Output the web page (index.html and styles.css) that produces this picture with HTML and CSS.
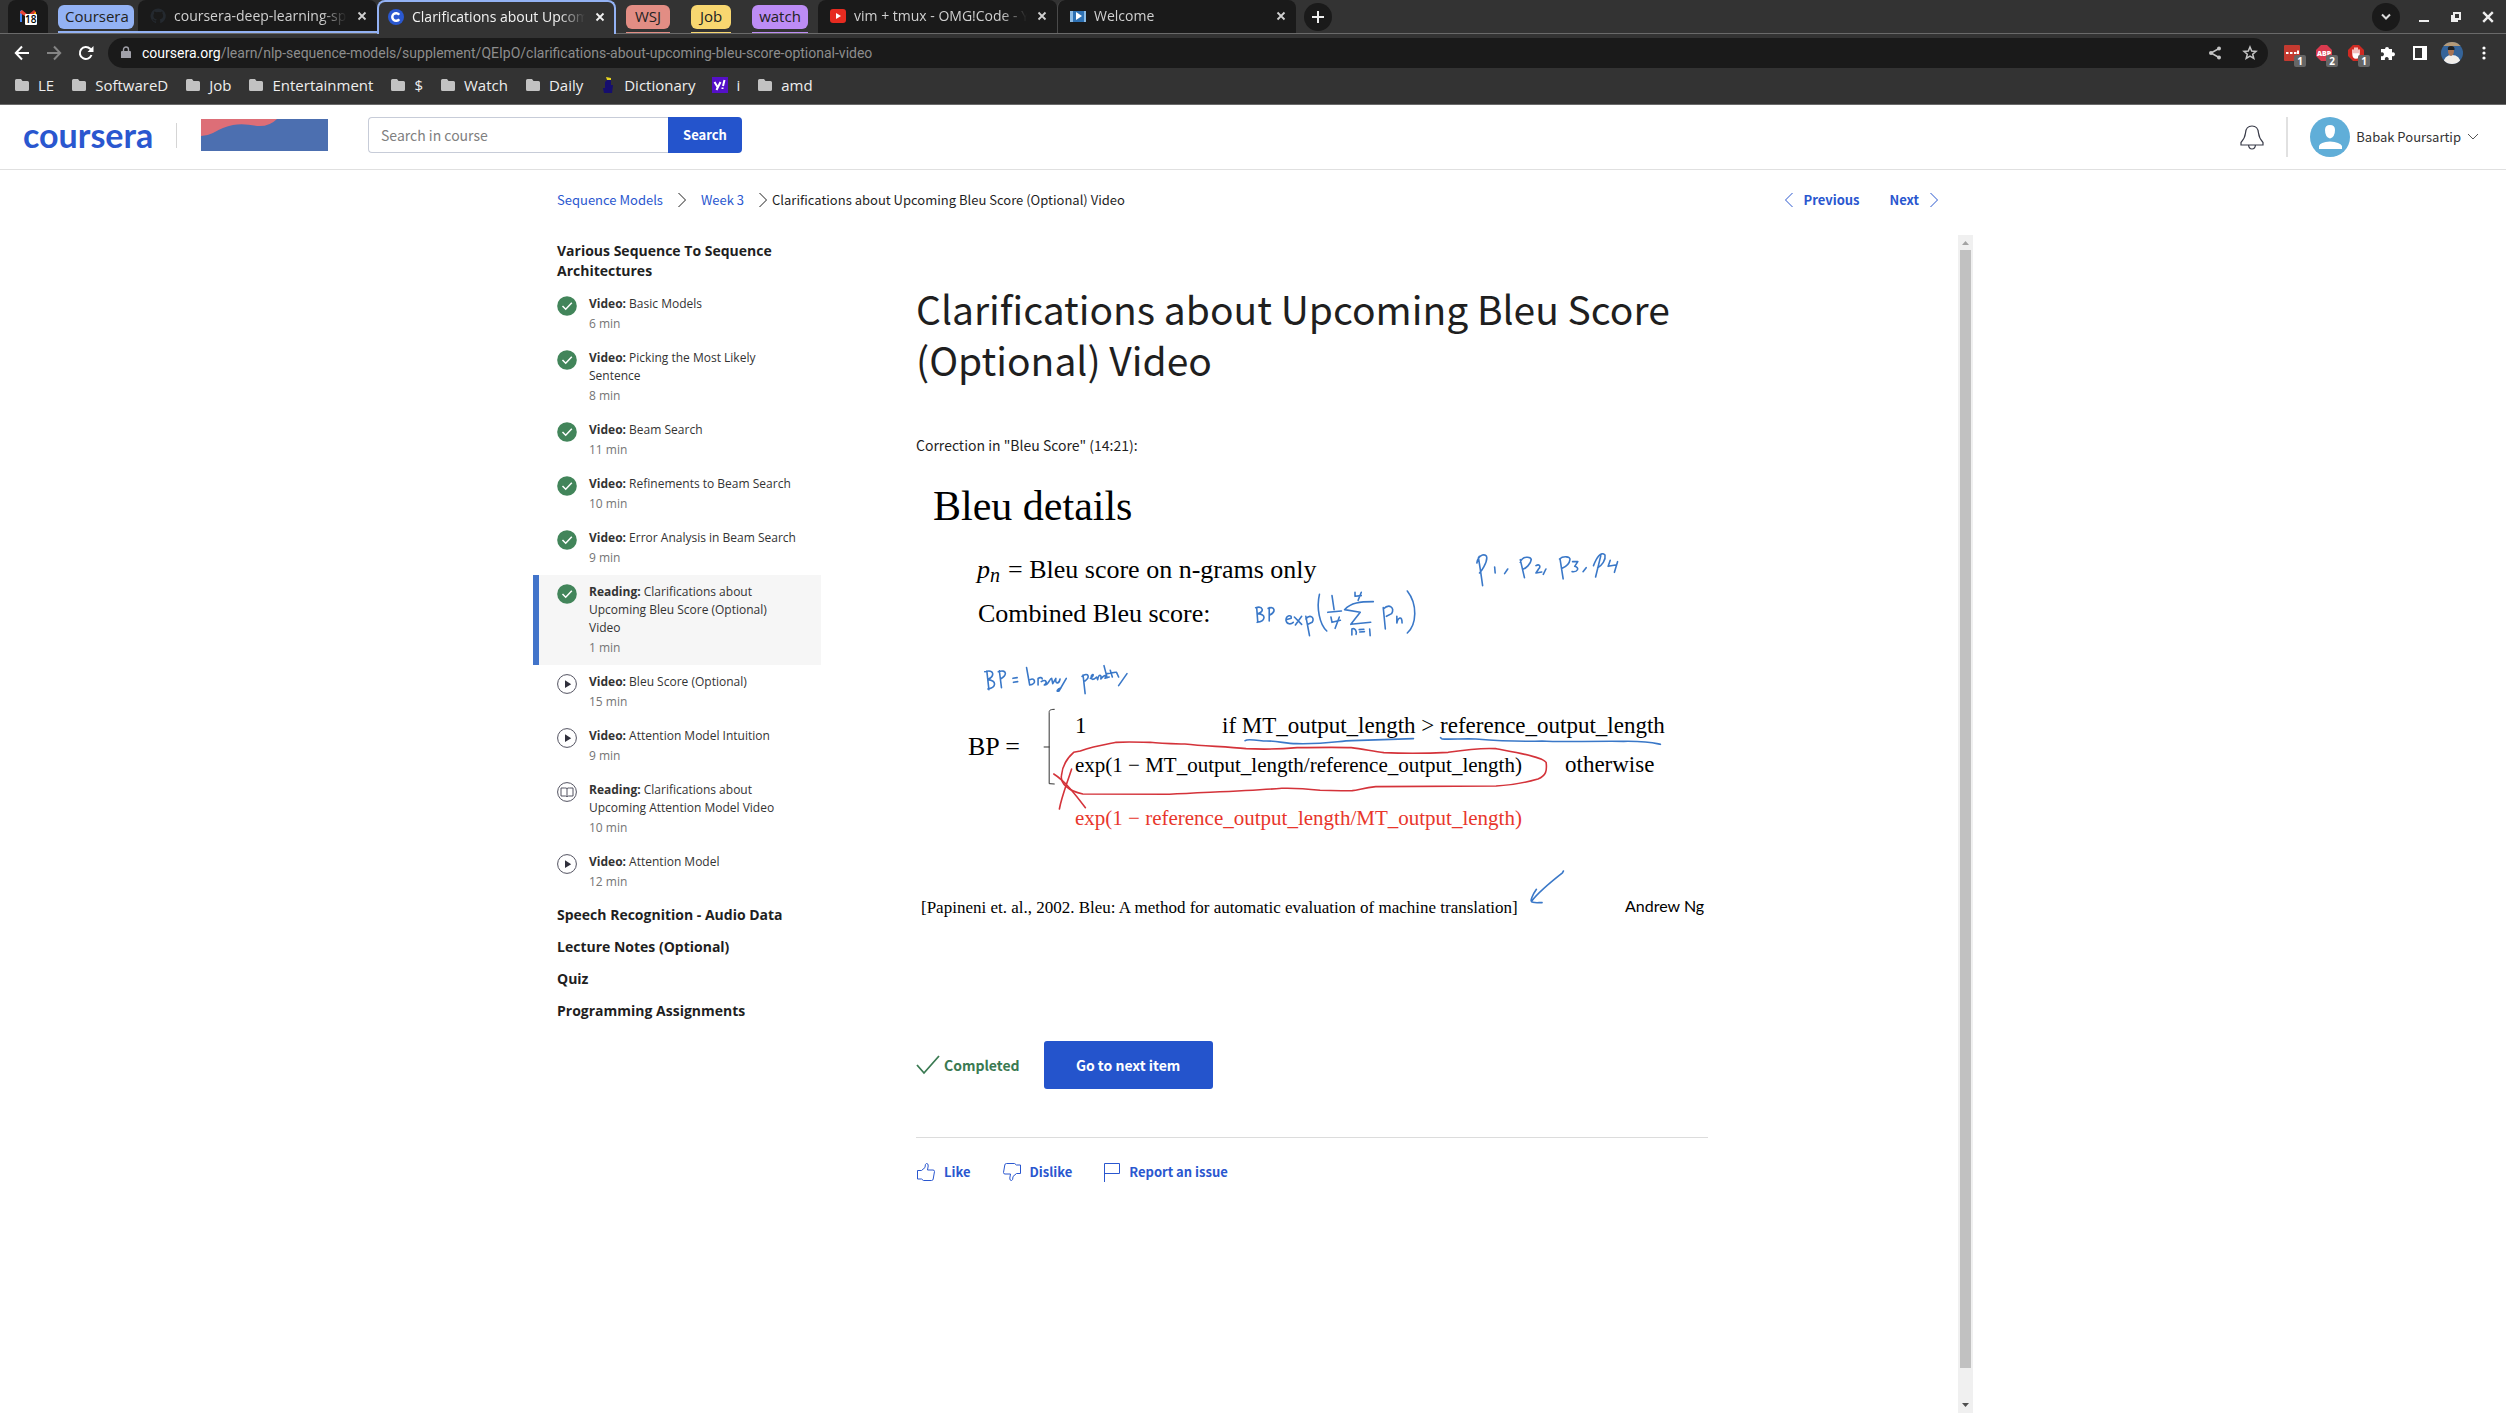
FILE: index.html
```html
<!DOCTYPE html>
<html lang="en">
<head>
<meta charset="utf-8">
<title>Clarifications about Upcoming Bleu Score (Optional) Video</title>
<link rel="stylesheet" href="styles.css">
</head>
<body>
<svg class="defs" aria-hidden="true">
  <symbol id="folder" viewBox="0 0 16 16"><path d="M1 3.500Q1 2 2.500 2H7L8.500 4H13.500Q15 4 15 5.500V12.500Q15 14 13.500 14H2.500Q1 14 1 12.500Z" fill="#c2c2c2"/></symbol>
  <symbol id="close" viewBox="0 0 10 10"><path d="M1.500 1.500L8.500 8.500M8.500 1.500L1.500 8.500" fill="none" stroke="currentColor" stroke-width="1.800"/></symbol>
  <symbol id="done" viewBox="0 0 20 20"><circle cx="10" cy="10" r="9.800" fill="#42855a"/><path d="M5.500 10L8.700 13.200L14.800 6.800" fill="none" stroke="#fff" stroke-width="1.500"/></symbol>
  <symbol id="play" viewBox="0 0 20 20"><circle cx="10" cy="10" r="9.400" fill="#fff" stroke="#525260" stroke-width="1"/><path d="M8 6.300L14.200 10.200L8 14Z" fill="#30303c"/></symbol>
  <symbol id="book" viewBox="0 0 20 20"><circle cx="10" cy="10" r="9.400" fill="#fff" stroke="#525260" stroke-width="1"/><path d="M10 6.500V15M10 6.500Q9 5.800 7.500 6H4V14H8.500Q9.500 14 10 15Q10.500 14 11.500 14H16V6H12.500Q11 5.800 10 6.500" fill="none" stroke="#525260"/></symbol>
  <symbol id="right" viewBox="0 0 10 16"><path d="M1.500 1L8.500 8L1.500 15" fill="none" stroke="currentColor"/></symbol>
  <symbol id="left" viewBox="0 0 10 16"><path d="M8.500 1L1.500 8L8.500 15" fill="none" stroke="currentColor"/></symbol>
  <symbol id="thumb" viewBox="0 0 20 20"><path d="M1.500 8.500H5.500L9 5.500Q9 1.500 10.500 1.500Q12.500 1.500 12.200 4L11.500 8H17Q18.500 8 18.500 9.500L17.200 17Q17 18.500 15.500 18.500H7.500L5.500 17H1.500Z" fill="none" stroke="currentColor"/></symbol>
</svg>

<div class="browser">
  <div class="tabs">
    <div class="tab tab-pin">
      <svg width="18" height="18" viewBox="0 0 18 18"><path d="M1 3L3 2V14H1Z" fill="#4285f4"/><path d="M1 4L3 2L9 7V10L1 5Z" fill="#ea4335"/><path d="M9 7L15 2L17 4V6L9 11Z" fill="#d33b2c"/><path d="M15 5L17 4V12H15Z" fill="#fbbc04"/><rect x="6" y="6" width="12" height="11" rx="1" fill="#fff"/><text x="6" y="15" font-family="Open Sans, sans-serif" font-size="10" font-weight="600">18</text></svg>
    </div>
    <div class="group">
      <button class="pill pill-blue">Coursera</button>
      <div class="tab">
        <svg width="16" height="16" viewBox="0 0 16 16"><path d="M8 .5a7.500 7.500 0 0 0-2.400 14.600c.4.100.5-.2.500-.4v-1.400c-2.100.5-2.600-.9-2.600-.9-.8-1.500-1.500-1.500-.6-1.500.8.100 1.200.8 1.200.8.700 1.200 1.800.8 2.200.6 0-.5.300-.8.500-1-1.700-.2-3.400-.9-3.400-3.800 0-.8.300-1.500.8-2-.1-.2-.4-1 .1-2 0 0 .6-.2 2.100.8a7 7 0 0 1 3.800 0c1.400-1 2-.8 2-.8.500 1 .2 1.800.1 2 .5.500.8 1.200.8 2 0 2.900-1.800 3.600-3.500 3.800.3.200.6.700.6 1.400v2c0 .2.100.5.500.4A7.500 7.500 0 0 0 8 .5" fill="#24292f"/></svg>
        <span class="tab-name">coursera-deep-learning-spec</span>
        <button class="x" aria-label="Close tab"><svg width="10" height="10"><use href="#close"/></svg></button>
      </div>
    </div>
    <div class="tab tab-on">
      <svg width="16" height="16" viewBox="0 0 16 16"><circle cx="8" cy="8" r="8" fill="#2a58d0"/><path d="M11.200 5.800A3.800 3.800 0 1 0 11.200 10.200" fill="none" stroke="#fff" stroke-width="2.500"/></svg>
      <span class="tab-name">Clarifications about Upcoming</span>
      <button class="x" aria-label="Close tab"><svg width="10" height="10"><use href="#close"/></svg></button>
    </div>
    <div class="pills">
      <span class="pill-line line-red"><button class="pill pill-red">WSJ</button></span>
      <span class="pill-line line-yellow"><button class="pill pill-yellow">Job</button></span>
      <span class="pill-line line-purple"><button class="pill pill-purple">watch</button></span>
    </div>
    <div class="tab">
      <svg width="16" height="16" viewBox="0 0 16 16"><rect y="1" width="16" height="14" rx="3" fill="#e62b20"/><path d="M6 5L11 8L6 11Z" fill="#fff"/></svg>
      <span class="tab-name">vim + tmux - OMG!Code - YouTube</span>
      <button class="x" aria-label="Close tab"><svg width="10" height="10"><use href="#close"/></svg></button>
    </div>
    <div class="tab tab-split">
      <svg width="16" height="16" viewBox="0 0 16 16"><path d="M0 3H16V14H0Z" fill="#8dbbe4"/><path d="M3 3H14V14H3Z" fill="#2f72b4"/><path d="M6 4L12 8L6 12Z" fill="#fff"/></svg>
      <span class="tab-name">Welcome</span>
      <button class="x" aria-label="Close tab"><svg width="10" height="10"><use href="#close"/></svg></button>
    </div>
    <button class="round" aria-label="New tab"><svg width="14" height="14" viewBox="0 0 14 14"><path d="M7 1V13M1 7H13" stroke="#eee" stroke-width="2"/></svg></button>
    <div class="window">
      <button class="round" aria-label="Search tabs"><svg width="10" height="8" viewBox="0 0 10 8"><path d="M1 1.500L5 5.500L9 1.500" fill="none" stroke="#ddd" stroke-width="2"/></svg></button>
      <button aria-label="Minimize"><svg width="12" height="12" viewBox="0 0 12 12"><path d="M1 10H11" stroke="#eee" stroke-width="2"/></svg></button>
      <button aria-label="Restore"><svg width="12" height="12" viewBox="0 0 12 12"><path d="M4 2H10V8H4ZM2 4V10H8" fill="none" stroke="#eee" stroke-width="2"/></svg></button>
      <button aria-label="Close"><svg width="12" height="12" viewBox="0 0 10 10"><path d="M1 1L9 9M9 1L1 9" stroke="#eee" stroke-width="2"/></svg></button>
    </div>
  </div>

  <div class="toolbar">
    <button aria-label="Back"><svg width="16" height="16" viewBox="0 0 16 16"><path d="M15 8H2M8 1.500L1.800 8L8 14.500" fill="none" stroke="#fff" stroke-width="2"/></svg></button>
    <button aria-label="Forward"><svg width="16" height="16" viewBox="0 0 16 16"><path d="M1 8H14M8 1.500L14.200 8L8 14.500" fill="none" stroke="#858585" stroke-width="2"/></svg></button>
    <button aria-label="Reload"><svg width="16" height="16" viewBox="0 0 16 16"><path d="M13.500 10A6 6 0 1 1 12.200 3.800L14 5.500" fill="none" stroke="#fff" stroke-width="2"/><path d="M15.500 1V7H9.500Z" fill="#fff"/></svg></button>
    <div class="omnibox">
      <svg width="12" height="14" viewBox="0 0 12 14"><path d="M2 5H10Q11 5 11 6V12H1V6Q1 5 2 5" fill="#a0a0a8"/><path d="M3.500 5V3.500A2.500 2.500 0 0 1 8.500 3.500V5" fill="none" stroke="#a0a0a8" stroke-width="1.400"/></svg>
      <span class="url"><b>coursera.org</b>/learn/nlp-sequence-models/supplement/QEIpO/clarifications-about-upcoming-bleu-score-optional-video</span>
      <svg width="14" height="14" viewBox="0 0 14 14"><path d="M11 2.500L3 7L11 11.500" fill="none" stroke="#c4c4c4" stroke-width="1.500"/><circle cx="11" cy="2.500" r="2" fill="#c4c4c4"/><circle cx="3" cy="7" r="2" fill="#c4c4c4"/><circle cx="11" cy="11.500" r="2" fill="#c4c4c4"/></svg>
      <svg width="16" height="16" viewBox="0 0 16 16"><path d="M8 2L9.700 6.100L14 6.400L10.700 9.200L11.800 13.500L8 11.200L4.200 13.500L5.300 9.200L2 6.400L6.300 6.100Z" fill="none" stroke="#c4c4c4" stroke-width="1.500"/></svg>
    </div>
    <div class="exts">
      <span class="ext"><svg width="16" height="16" viewBox="0 0 16 16"><rect width="16" height="16" rx="1" fill="#c43a30"/><path d="M2 8H4.500M6 8H8.500M10 8H12.500M14 5.500V9" stroke="#fff" stroke-width="2"/></svg><span class="count">1</span></span>
      <span class="ext"><svg width="16" height="16" viewBox="0 0 16 16"><path d="M5 0H11L16 5V11L11 16H5L0 11V5Z" fill="#d93a4e"/><text x="1" y="11" font-family="Open Sans, sans-serif" font-size="7" font-weight="800" fill="#fff">ABP</text></svg><span class="count">2</span></span>
      <span class="ext"><svg width="16" height="16" viewBox="0 0 16 16"><path d="M5 0H11L16 5V11L11 16H5L0 11V5Z" fill="#cf2a22"/><path d="M5 9V5M7 8V3M9 8V3M11 9V5M5 9Q5 13 8 13Q11 13 11 9Z" fill="#fff" stroke="#fff" stroke-width="1.400" stroke-linecap="round"/></svg><span class="count">1</span></span>
      <svg width="16" height="16" viewBox="0 0 16 16"><path d="M1 4H5A2 2 0 1 1 9 4H12V7.500A2 2 0 1 1 12 11V15H8.500A2 2 0 1 0 5 15H1V11A2 2 0 1 0 1 7.500Z" fill="#fff"/></svg>
      <svg width="16" height="16" viewBox="0 0 16 16"><path d="M1 1H15V15H1ZM3 3V13H10V3Z" fill="#fff" fill-rule="evenodd"/></svg>
      <svg width="22" height="22" viewBox="0 0 22 22"><clipPath id="face"><circle cx="11" cy="11" r="11"/></clipPath><g clip-path="url(#face)"><rect width="22" height="22" fill="#35649a"/><rect width="22" height="4" fill="#b59a78"/><path d="M2 22Q3 13 11 13Q19 13 20 22Z" fill="#f1eeea"/><ellipse cx="10" cy="9" rx="3" ry="5" fill="#a87454"/><path d="M7 8Q6 4 10 4Q14 4 13.500 8Z" fill="#222"/></g></svg>
      <svg width="4" height="16" viewBox="0 0 4 16"><circle cx="2" cy="3" r="1.600" fill="#fff"/><circle cx="2" cy="8" r="1.600" fill="#fff"/><circle cx="2" cy="13" r="1.600" fill="#fff"/></svg>
    </div>
  </div>

  <nav class="bookmarks" aria-label="Bookmarks">
    <a href="#"><svg width="16" height="16"><use href="#folder"/></svg>LE</a>
    <a href="#"><svg width="16" height="16"><use href="#folder"/></svg>SoftwareD</a>
    <a href="#"><svg width="16" height="16"><use href="#folder"/></svg>Job</a>
    <a href="#"><svg width="16" height="16"><use href="#folder"/></svg>Entertainment</a>
    <a href="#"><svg width="16" height="16"><use href="#folder"/></svg>$</a>
    <a href="#"><svg width="16" height="16"><use href="#folder"/></svg>Watch</a>
    <a href="#"><svg width="16" height="16"><use href="#folder"/></svg>Daily</a>
    <a href="#"><svg width="16" height="16" viewBox="0 0 16 16"><path d="M7 3H11V8H13L12 16H4L3 11H5V5Z" fill="#160e6e"/><path d="M6 0L11 1V3H7Z" fill="#e9d51f"/></svg>Dictionary</a>
    <a href="#"><svg width="16" height="16" viewBox="0 0 16 16"><rect width="16" height="16" fill="#5510c8"/><path d="M2.500 5L5.500 10M8.500 5L4.500 13" stroke="#fff" stroke-width="2"/><path d="M12.500 3L11 9M10.500 10.500V12" stroke="#fff" stroke-width="2"/></svg>i</a>
    <a href="#"><svg width="16" height="16"><use href="#folder"/></svg>amd</a>
  </nav>
</div>

<header class="site">
  <a class="logo" href="#">coursera</a>
  <span class="bar"></span>
  <svg class="partner" width="127" height="32" viewBox="0 0 127 32" role="img" aria-label="Partner"><rect width="127" height="32" fill="#4c6fb0"/><path d="M0 0H76Q68 8 56 7Q42 4 32 6Q22 8 12 14Q6 17 0 17Z" fill="#dd6e77"/></svg>
  <form class="search">
    <input type="text" aria-label="Search in course" placeholder="Search in course">
    <button type="button">Search</button>
  </form>
  <div class="account">
    <button aria-label="Notifications"><svg width="24" height="26" viewBox="0 0 24 26"><path d="M1 21V18.500Q5 14 5.500 9Q6 2 12 2Q18 2 18.500 9Q19 14 23 18.500V21ZM8.500 21Q9 25 12 25Q15 25 15.500 21" fill="none" stroke="#383a48" stroke-width="1.200"/></svg></button>
    <span class="rule"></span>
    <button class="user">
      <svg width="40" height="40" viewBox="0 0 40 40"><circle cx="20" cy="20" r="20" fill="#60aed8"/><path d="M15 13Q15 8 20 8Q25 8 25 13Q25 20 20 21.500Q15 20 15 13M9 32V29Q10 25 20 24.500Q30 25 32 29V32Z" fill="#fff"/></svg>
      Babak Poursartip
      <svg width="12" height="8" viewBox="0 0 12 8"><path d="M1 1L6 6L11 1" fill="none" stroke="#555"/></svg>
    </button>
  </div>
</header>

<div class="shell">
  <div class="crumbs">
    <nav class="trail" aria-label="Breadcrumb">
      <a href="#">Sequence Models</a>
      <svg width="10" height="16"><use href="#right"/></svg>
      <a href="#">Week 3</a>
      <svg width="10" height="16"><use href="#right"/></svg>
      <span class="here">Clarifications about Upcoming Bleu Score (Optional) Video</span>
    </nav>
    <nav class="pager" aria-label="Items">
      <a href="#"><svg width="10" height="16"><use href="#left"/></svg>Previous</a>
      <a href="#">Next<svg width="10" height="16"><use href="#right"/></svg></a>
    </nav>
  </div>

  <div class="columns">
    <aside class="side">
      <h2>Various Sequence To Sequence Architectures</h2>
      <ul>
        <li><a href="#"><svg width="20" height="20"><use href="#done"/></svg><span><b>Video:</b> Basic Models<small>6 min</small></span></a></li>
        <li><a href="#"><svg width="20" height="20"><use href="#done"/></svg><span><b>Video:</b> Picking the Most Likely Sentence<small>8 min</small></span></a></li>
        <li><a href="#"><svg width="20" height="20"><use href="#done"/></svg><span><b>Video:</b> Beam Search<small>11 min</small></span></a></li>
        <li><a href="#"><svg width="20" height="20"><use href="#done"/></svg><span><b>Video:</b> Refinements to Beam Search<small>10 min</small></span></a></li>
        <li><a href="#"><svg width="20" height="20"><use href="#done"/></svg><span><b>Video:</b> Error Analysis in Beam Search<small>9 min</small></span></a></li>
        <li><a class="on" href="#"><svg width="20" height="20"><use href="#done"/></svg><span><b>Reading:</b> Clarifications about Upcoming Bleu Score (Optional) Video<small>1 min</small></span></a></li>
        <li><a href="#"><svg width="20" height="20"><use href="#play"/></svg><span><b>Video:</b> Bleu Score (Optional)<small>15 min</small></span></a></li>
        <li><a href="#"><svg width="20" height="20"><use href="#play"/></svg><span><b>Video:</b> Attention Model Intuition<small>9 min</small></span></a></li>
        <li><a href="#"><svg width="20" height="20"><use href="#book"/></svg><span><b>Reading:</b> Clarifications about Upcoming Attention Model Video<small>10 min</small></span></a></li>
        <li><a href="#"><svg width="20" height="20"><use href="#play"/></svg><span><b>Video:</b> Attention Model<small>12 min</small></span></a></li>
      </ul>
      <h2>Speech Recognition - Audio Data</h2>
      <h2>Lecture Notes (Optional)</h2>
      <h2>Quiz</h2>
      <h2>Programming Assignments</h2>
    </aside>

    <main class="reading">
      <article>
        <h1>Clarifications about Upcoming Bleu Score (Optional) Video</h1>
        <p>Correction in "Bleu Score" (14:21):</p>
        <svg class="slide" viewBox="916 470 792 490" role="img" aria-label="Bleu details slide">
          <g class="serif">
            <text x="933" y="519" class="t-title">Bleu details</text>
            <text x="977" y="577" class="t-body"><tspan font-style="italic">p</tspan><tspan font-style="italic" font-size="20" dy="4">n</tspan></text>
            <text x="1008" y="577" class="t-body">= Bleu score on n-grams only</text>
            <text x="978" y="621" class="t-body">Combined Bleu score:</text>
            <text x="968" y="754" class="t-body">BP =</text>
            <text x="1075" y="732" class="t-case">1</text>
            <text x="1222" y="732" class="t-case">if MT_output_length &gt; reference_output_length</text>
            <text x="1075" y="771" class="t-eq">exp(1 − MT_output_length/reference_output_length)</text>
            <text x="1565" y="771" class="t-case">otherwise</text>
            <text x="1075" y="824" class="t-eq" fill="#e8362c">exp(1 − reference_output_length/MT_output_length)</text>
            <text x="921" y="912" class="t-cite">[Papineni et. al., 2002. Bleu: A method for automatic evaluation of machine translation]</text>
          </g>
          <text x="1625" y="911" class="t-name">Andrew Ng</text>
          <!-- blue pen notes beside the formulas -->
          <g class="ink" transform="translate(900 540) scale(.523 .3333)" stroke="#3a78c8">
            <path d="M1108 46L1106 50L1110 90L1114 134M1103 66C1106 38 1122 36 1122 50C1122 66 1112 90 1108 96M1137 78L1138 96M1162 84L1156 98"/>
            <path d="M1186 56L1194 110M1186 64C1190 44 1206 46 1207 56C1206 70 1196 82 1192 84M1216 74C1222 68 1226 76 1221 84L1216 96L1227 93M1235 84L1230 100"/>
            <path d="M1262 54L1268 114M1261 54C1268 44 1282 46 1281 56C1280 68 1272 78 1266 82M1286 62L1296 62L1290 76C1300 80 1296 94 1285 92M1312 80L1306 92"/>
            <path d="M1340 44L1330 108M1326 74C1332 50 1340 30 1348 42C1350 56 1342 74 1334 80M1358 58L1354 76L1368 72M1372 62L1366 94"/>
            <path d="M682 200L684 242M680 200C694 194 698 212 684 218C702 220 698 242 683 244M706 200L706 240M704 202C716 194 720 212 707 222"/>
            <path d="M738 236L748 232C750 220 738 222 738 238C740 252 748 250 752 244M754 228L768 250M768 226L756 252M776 226L783 284M776 234C784 218 794 230 788 244L780 250"/>
            <path d="M802 160C796 200 802 250 816 270M826 164L830 206M818 214L844 210M824 228L826 244L842 238M840 228L832 262"/>
            <path d="M905 182C880 182 862 184 850 206L880 214L862 250L900 244M870 154L870 166L882 164M882 154L876 178M864 282L864 264C870 260 874 270 872 280M878 266L887 265M879 273L888 272M898 264L899 284"/>
            <path d="M924 200L928 264M924 204C936 186 946 200 940 218L930 226M950 226L950 246C952 230 960 222 960 246M970 150C990 190 988 250 970 276"/>
            <path d="M166 390L170 446M162 392C180 384 182 404 168 416C186 420 184 440 168 444M190 390L194 440M188 392C204 384 206 402 192 414M216 412L224 410M217 424L225 422"/>
            <path d="M242 380L248 432C262 430 258 408 249 416M264 432L264 412C268 408 272 410 272 414M270 422C280 412 282 426 276 432C284 434 286 412 290 412L292 428L298 412C296 430 304 430 306 414M318 412L304 450C298 454 300 444 308 440"/>
            <path d="M350 402L354 458M348 406C360 392 364 408 354 420M364 412C372 404 370 396 366 404C364 418 370 418 376 408L378 416C380 398 386 400 384 414C392 398 396 404 392 412L400 408M390 374L396 410M402 388L406 408M396 398L412 394M414 394L418 408M434 398L418 434"/>
          </g>
          <g class="ink" transform="translate(940 690) scale(.5102 .3333)" stroke="#3a78c8">
            <path class="bracket" d="M224 55C214 55 214 60 214 64V278L224 279M204 168H214"/>
            <path d="M598 149C604 142 612 148 634 150C660 148 676 158 698 158C760 160 780 150 808 149L928 143"/>
            <path d="M981 140L984 144C1000 146 1030 142 1050 144C1100 150 1140 152 1180 150C1220 154 1260 150 1340 151C1390 150 1400 156 1412 160"/>
            <path d="M1222 540L1220 546C1200 570 1170 610 1160 630M1169 595C1162 610 1154 634 1162 634C1170 637 1176 634 1180 635"/>
            <g stroke="#d4333a">
              <path d="M275 180C300 166 325 160 345 154C370 152 400 154 412 154C430 158 440 158 480 159C520 166 560 166 600 173C640 176 670 174 700 170C740 169 780 168 806 170C830 174 850 182 870 185C920 188 970 186 996 184C1030 176 1060 170 1090 173C1120 182 1180 196 1188 214C1190 240 1188 254 1172 264C1140 278 1110 284 1090 285C1000 286 920 286 854 287C830 290 820 298 808 299C780 300 760 299 745 298C710 292 690 291 670 292C600 300 520 304 450 310L280 309C250 300 236 276 238 254C240 220 250 200 262 184L275 180"/>
              <path d="M223 249C245 270 265 310 285 350M258 234C246 290 238 320 234 354"/>
            </g>
          </g>
        </svg>
        <div class="finish">
          <span class="completed"><svg width="24" height="20" viewBox="0 0 24 20"><path d="M1 10L8 18L23 1" fill="none" stroke="#3a7a52" stroke-width="1.800"/></svg>Completed</span>
          <button>Go to next item</button>
        </div>
        <div class="feedback">
          <button><svg width="20" height="20"><use href="#thumb"/></svg>Like</button>
          <button><svg class="flip" width="20" height="20"><use href="#thumb"/></svg>Dislike</button>
          <button><svg width="18" height="20" viewBox="0 0 18 20"><path d="M1.500 20V1.500H16.500V11.500H1.500" fill="none" stroke="currentColor"/></svg>Report an issue</button>
        </div>
      </article>
      <div class="scroll" aria-hidden="true">
        <svg width="15" height="15" viewBox="0 0 15 15"><path d="M4 10L7.500 6L11 10Z" fill="#a3a3a3"/></svg>
        <span class="thumb"></span>
        <svg width="15" height="15" viewBox="0 0 15 15"><path d="M4 5L7.500 9L11 5Z" fill="#505050"/></svg>
      </div>
    </main>
  </div>
</div>
</body>
</html>
```
FILE: styles.css
```css
* { box-sizing: border-box; }
body {
  margin: 0;
  min-height: 100vh;
  display: flex;
  flex-direction: column;
  background: #fff;
  color: #1f1f1f;
  font: 13px/20px "Noto Sans CJK SC", "Open Sans", sans-serif;
}
button { padding: 0; border: 0; background: none; color: inherit; font: inherit; }
a { color: inherit; text-decoration: none; }
svg { display: block; flex: none; }
.defs { position: absolute; width: 0; height: 0; }

/* browser window */
.browser { background: #333; color: #eee; border-bottom: 1px solid #6a6a6a; font: 15px/20px "Open Sans", sans-serif; }
.tabs { display: flex; height: 34px; padding-left: 8px; border-bottom: 1px solid #6a6a6a; }
.tab { display: flex; align-items: center; gap: 8px; width: 239px; padding: 0 10px 2px 12px; background: #1a1a1a; border-radius: 8px 8px 0 0; color: #d0d0d0; font-size: 14px; }
.tab-pin { width: 40px; padding: 0 11px; margin-right: 10px; }
.tab-name { flex: 1; overflow: hidden; white-space: nowrap; -webkit-mask-image: linear-gradient(90deg, #000 85%, transparent); mask-image: linear-gradient(90deg, #000 85%, transparent); }
.tab-on { height: 34px; padding: 0 9px 2px; background: #333; border: 2px solid #93b2f4; border-bottom: 0; color: #f2f2f2; }
.tab-split { border-left: 1px solid #4a4a4a; }
.x { width: 10px; height: 10px; margin-left: 2px; }
.group { display: flex; align-items: flex-start; gap: 4px; border-bottom: 2px solid #93b2f4; }
.group .tab { height: 31px; padding-bottom: 0; }
.pill { height: 24px; margin-top: 5px; padding: 0 7px 2px; border-radius: 6px; color: #222; white-space: nowrap; }
.pill-blue { width: 76px; background: #93b2f4; }
.pills { display: flex; gap: 21px; padding: 0 10px; }
.pill-line { border-bottom: 1px solid; }
.pill-red { width: 44px; background: #e28d84; }
.pill-yellow { width: 40px; background: #f8d770; }
.pill-purple { width: 56px; background: #bd8cf5; }
.line-red { border-color: #e28d84; }
.line-yellow { border-color: #f8d770; }
.line-purple { border-color: #bd8cf5; }
.round { display: flex; align-items: center; justify-content: center; width: 28px; height: 28px; margin: 3px 0 0 8px; border-radius: 14px; background: #1a1a1a; }
.window { display: flex; align-items: center; gap: 20px; margin-left: auto; padding-right: 12px; }
.window .round { margin: 0 -2px 0 0; }

.toolbar { display: flex; align-items: center; gap: 16px; height: 38px; padding: 0 20px 0 14px; }
.omnibox { flex: 1; display: flex; align-items: center; gap: 20px; height: 30px; margin: 0 0 0 -2px; padding: 0 10px 0 12px; border-radius: 15px; background: #1a1a1a; }
.url { flex: 1; margin-left: -10px; color: #8d8d8d; font: 14px/20px Roboto, sans-serif; }
.url b { color: #fff; font-weight: 400; }
.exts { display: flex; align-items: center; gap: 16px; }
.exts > :nth-last-child(2) { margin-left: -3px; }
.exts > :last-child { margin-left: 3px; }
.ext { position: relative; }
.count { position: absolute; left: 10px; top: 10px; width: 12px; height: 12px; border-radius: 2px; background: #666; color: #fff; font-size: 10px; font-weight: 700; line-height: 12px; text-align: center; }
.bookmarks { display: flex; gap: 17px; height: 32px; padding: 0 14px 6px; }
.bookmarks a { display: flex; align-items: center; gap: 8px; }

/* site header */
.site { display: flex; align-items: center; height: 65px; padding: 0 27px 4px 23px; border-bottom: 1px solid #e0e0e0; }
.logo { width: 129px; color: #2a57cf; font: 700 34px/38px Lato, sans-serif; }
.bar { width: 1px; height: 25px; margin: 0 24px; background: #d5d5d5; }
.partner { margin-right: 40px; }
.search { display: flex; height: 36px; }
.search input { width: 300px; padding: 0 12px; border: 1px solid #c7ccd8; border-right: 0; border-radius: 4px 0 0 4px; font: 14px "Noto Sans CJK SC", sans-serif; }
.search input::placeholder { color: #808080; }
.search button { width: 74px; border-radius: 0 4px 4px 0; background: #2454cc; color: #fff; font-weight: 700; }
.account { display: flex; align-items: center; gap: 22px; margin: 4px 0 0 auto; color: #333; }
.rule { width: 2px; height: 40px; background: #e1e1e1; }
.user { display: flex; align-items: center; gap: 6px; }

/* course page */
.shell { flex: 1; display: flex; flex-direction: column; width: 100%; max-width: 1440px; margin: 0 auto; }
.crumbs { display: flex; justify-content: space-between; height: 65px; padding: 20px 34px 0 24px; }
.trail, .pager, .pager a { display: flex; align-items: center; height: 20px; }
.trail { gap: 14px; }
.trail a, .pager { color: #2a57cf; }
.here { margin-left: -10px; }
.pager { gap: 30px; font-weight: 700; }
.pager a { gap: 10px; }
.columns { flex: 1; display: flex; }
.side { flex: none; width: 288px; color: #333; font: 12px/18px "Open Sans", sans-serif; }
.side h2 { margin: 0; padding: 6px 32px 6px 24px; color: #1f1f1f; font: 700 14px/20px "Open Sans", sans-serif; }
.side ul { margin: 0; padding: 0; list-style: none; }
.side li a { display: flex; gap: 12px; padding: 8px 24px 8px 18px; border-left: 6px solid transparent; }
.side li svg { margin-top: 1px; }
.side li .on { background: #f6f6f6; border-color: #4274ca; }
.side small { display: block; margin-top: 2px; color: #757575; font-size: 12px; }

.reading { flex: 1; display: flex; justify-content: space-between; padding-left: 95px; }
.reading article { flex: 0 1 792px; }
.reading h1 { margin: 48px 0 50px; font: 400 39px/51px "Noto Sans CJK SC", sans-serif; }
.reading p { margin: 0 0 16px; font-size: 14px; line-height: 20px; }
.slide { width: 100%; height: auto; }
.serif { font-family: "Liberation Serif", serif; }
.t-title { font-size: 42px; }
.t-body { font-size: 26px; }
.t-case { font-size: 23px; }
.t-eq { font-size: 21px; }
.t-cite { font-size: 17px; }
.t-name { font: 16px Lato, sans-serif; }
.ink path { fill: none; stroke-width: 1.6; stroke-linecap: round; stroke-linejoin: round; vector-effect: non-scaling-stroke; }
.ink .bracket { stroke: #333; stroke-width: 1; }
.finish { display: flex; align-items: center; gap: 24px; margin-top: 80px; padding-bottom: 48px; border-bottom: 1px solid #dcdcdc; font-size: 14px; font-weight: 700; }
.completed { display: flex; align-items: center; gap: 4px; color: #3a7a52; }
.finish button { width: 169px; height: 48px; border-radius: 3px; background: #2454cc; color: #fff; }
.feedback { display: flex; gap: 31px; padding-top: 24px; color: #2a57cf; font-weight: 700; }
.feedback button { display: flex; align-items: center; gap: 8px; }
.flip { transform: rotate(180deg); }
.scroll { display: flex; flex-direction: column; width: 15px; background: #f0f0f0; }
.thumb { flex: 1; margin: 0 2px 30px; background: #c1c1c1; }
```
